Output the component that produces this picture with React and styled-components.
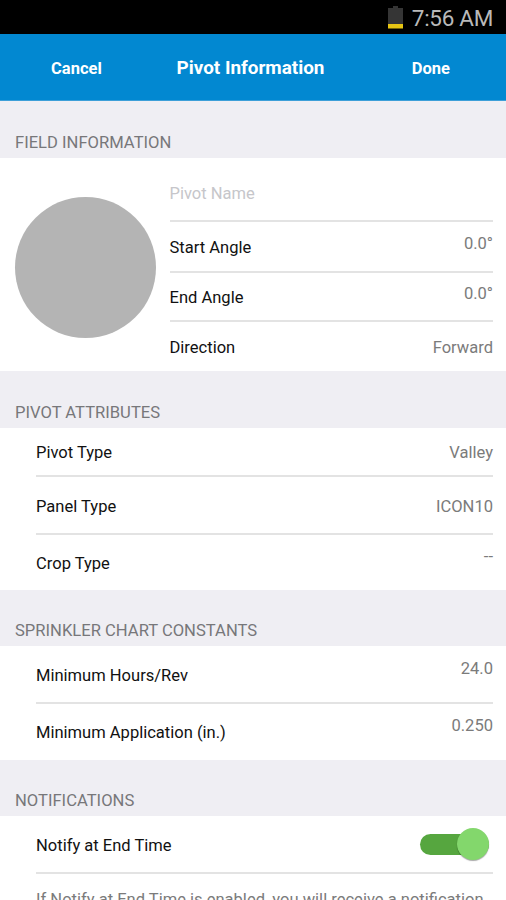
import React, { useState } from 'react';
import styled, { createGlobalStyle } from 'styled-components';

export default function App() {
    const [notify, setNotify] = useState(true);

    return (
        <>
            <GlobalStyle />
            <Screen>
                <StatusBar>
                    <Battery />
                    <Clock>7:56 AM</Clock>
                </StatusBar>

                <Header>
                    <HeaderButton>Cancel</HeaderButton>
                    <Title>Pivot Information</Title>
                    <HeaderButton>Done</HeaderButton>
                </Header>

                <SectionTitle $height={57}>FIELD INFORMATION</SectionTitle>
                <FieldPanel>
                    <Circle />
                    <Rows>
                        <Row $height={64} $top={10}>
                            <NameInput placeholder="Pivot Name" />
                        </Row>
                        <Row $height={51}>
                            <Label>Start Angle</Label>
                            <Value $lift={4}>0.0°</Value>
                        </Row>
                        <Row $height={49}>
                            <Label>End Angle</Label>
                            <Value $lift={4}>0.0°</Value>
                        </Row>
                        <Row $height={49}>
                            <Label>Direction</Label>
                            <Value>Forward</Value>
                        </Row>
                    </Rows>
                </FieldPanel>

                <SectionTitle $height={57}>PIVOT ATTRIBUTES</SectionTitle>
                <Panel>
                    <Row $height={49}>
                        <Label>Pivot Type</Label>
                        <Value>Valley</Value>
                    </Row>
                    <Row $height={58} $top={3}>
                        <Label>Panel Type</Label>
                        <Value>ICON10</Value>
                    </Row>
                    <Row $height={55}>
                        <Label>Crop Type</Label>
                        <Value $lift={7}>--</Value>
                    </Row>
                </Panel>

                <SectionTitle $height={56}>SPRINKLER CHART CONSTANTS</SectionTitle>
                <Panel>
                    <Row $height={58} $top={4}>
                        <Label>Minimum Hours/Rev</Label>
                        <Value $lift={7}>24.0</Value>
                    </Row>
                    <Row $height={56}>
                        <Label>Minimum Application (in.)</Label>
                        <Value $lift={7}>0.250</Value>
                    </Row>
                </Panel>

                <SectionTitle $height={56}>NOTIFICATIONS</SectionTitle>
                <Panel>
                    <Row $height={58} $top={4}>
                        <Label>Notify at End Time</Label>
                        <Switch role="switch" aria-checked={notify} onClick={() => setNotify(!notify)}>
                            <Thumb $on={notify} />
                        </Switch>
                    </Row>
                    <Hint>If Notify at End Time is enabled, you will receive a notification</Hint>
                </Panel>
            </Screen>
        </>
    )
}

function Battery() {
    return (
        <svg width="15" height="23" viewBox="0 0 15 23">
            <path d="M5 0h5v2h5v16H0V2h5z" fill="#353535" />
            <rect y="18" width="15" height="4.5" fill="#e6c514" />
        </svg>
    )
}

const GlobalStyle = createGlobalStyle`
    * {
        box-sizing: border-box;
    }

    body {
        margin: 0;
        background: #efeef3;
    }
`;

const Screen = styled.div`
    width: 506px;
    height: 900px;
    overflow: hidden;
    background: #efeef3;
    color: #111;
    font-family: Roboto, sans-serif;
    font-size: 16.55px;
    line-height: 20px;
`;

const StatusBar = styled.div`
    display: flex;
    justify-content: flex-end;
    align-items: center;
    gap: 9px;
    height: 34px;
    padding-right: 13px;
    background: #000;
`;

const Clock = styled.span`
    padding-top: 2px;
    color: #b9b9b9;
    font-size: 22.5px;
    letter-spacing: -0.3px;
    line-height: 26px;
`;

const Header = styled.header`
    display: grid;
    grid-template-columns: 1fr auto 1fr;
    align-items: center;
    height: 67px;
    padding: 2px 56px 0 51px;
    background: #0288d1;
    color: #fff;
    border-bottom: 1px solid #3d9fd8;
`;

const HeaderButton = styled.button`
    justify-self: start;
    padding: 2px 0 0;
    border: 0;
    background: none;
    color: inherit;
    font: 700 16.5px/20px Roboto, sans-serif;

    &:last-child {
        justify-self: end;
    }
`;

const Title = styled.h1`
    margin: 0;
    font-size: 18.9px;
    font-weight: 700;
    line-height: 22px;
`;

const SectionTitle = styled.h2`
    display: flex;
    align-items: flex-end;
    height: ${({ $height }) => $height}px;
    margin: 0;
    padding: 0 15px 6px;
    color: #77777a;
    font-size: 16.6px;
    font-weight: 400;
    line-height: 19px;
`;

const Panel = styled.section`
    padding: 0 13px 0 36px;
    background: #fff;
`;

const FieldPanel = styled(Panel)`
    display: flex;
    align-items: center;
    gap: 14px;
    padding-left: 14.5px;
`;

const Circle = styled.div`
    flex: none;
    width: 141px;
    height: 141px;
    margin-top: 6px;
    border-radius: 50%;
    background: #b4b4b4;
`;

const Rows = styled.div`
    flex: 1;
`;

const Row = styled.div`
    display: flex;
    justify-content: space-between;
    align-items: center;
    height: ${({ $height }) => $height}px;
    padding-top: ${({ $top }) => $top || 2}px;
    border-bottom: 2px solid #e3e3e3;

    &:last-child {
        border-bottom: 0;
    }
`;

const Label = styled.span`
    white-space: nowrap;
`;

const Value = styled.span`
    margin-bottom: ${({ $lift }) => ($lift || 0) * 2}px;
    color: #7b7b7b;
`;

const NameInput = styled.input`
    width: 100%;
    padding: 0;
    border: 0;
    outline: 0;
    font: inherit;

    &::placeholder {
        color: #c6c6ca;
    }
`;

const Switch = styled.button`
    display: flex;
    align-items: center;
    width: 69px;
    height: 21px;
    margin: 0 4px 4px 0;
    padding: 0;
    border: 0;
    border-radius: 11px;
    background: #56a63f;
`;

const Thumb = styled.span`
    width: 32px;
    height: 32px;
    margin-left: ${({ $on }) => ($on ? '37px' : '0')};
    border-radius: 50%;
    background: #83d76c;
    box-shadow: 0 1px 1px rgba(0, 0, 0, 0.35);
`;

const Hint = styled.p`
    margin: 0;
    padding-top: 16px;
    color: #7b7b7b;
    white-space: nowrap;
`;
